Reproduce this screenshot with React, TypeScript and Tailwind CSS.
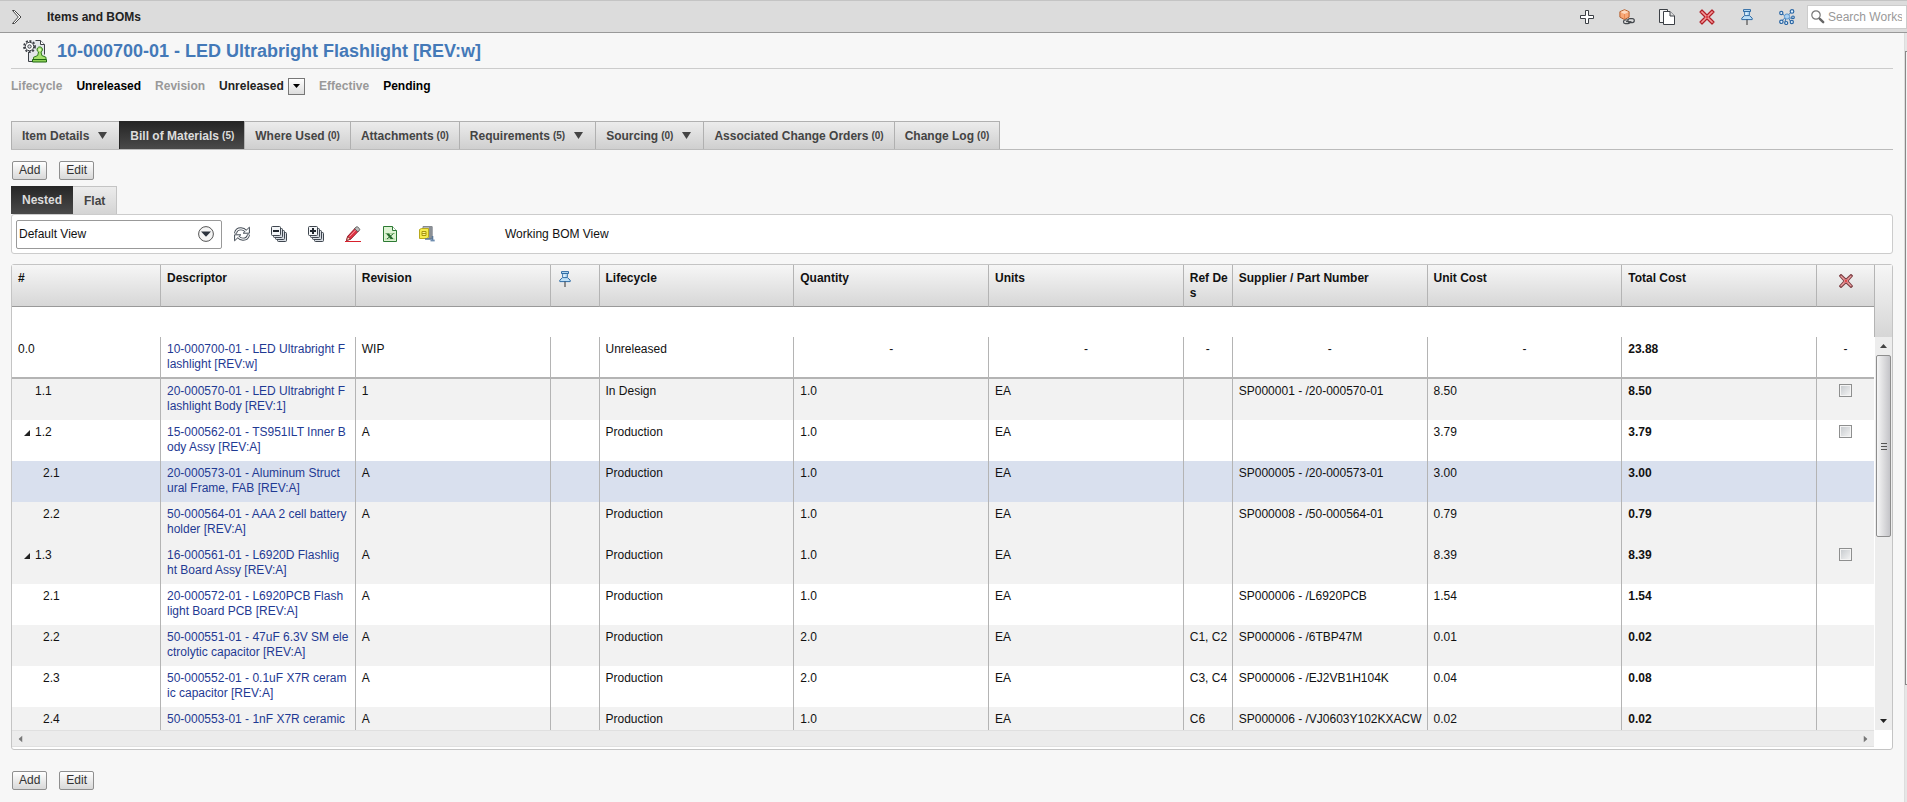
import { ReactNode, useState } from "react";
import clsx from "clsx";

function Icon({ children, className }: { children: ReactNode; className?: string }) {
  return (
    <svg viewBox="0 0 16 16" className={clsx("block size-4 shrink-0", className)} fill="none" aria-hidden="true">
      {children}
    </svg>
  );
}

function PlusIcon() {
  return (
    <Icon>
      <path d="M6.5 1.5h3v5h5v3h-5v5h-3v-5h-5v-3h5z" fill="#fff" stroke="#3c4046" />
    </Icon>
  );
}

function PartsIcon() {
  return (
    <Icon>
      <path d="M5.5.7l4.6 2v5.4l-4.6 2.5L.9 8.1V2.7z" fill="#f8a878" stroke="#b5602f" />
      <path d="M1.4 3.1l4.1 1.8 4.1-1.8-4.1-1.9z" fill="#fdd9bf" />
      <path d="M5.5 5v5" stroke="#e98b55" />
      <rect x="4.500" y="11" width="6.500" height="3.600" rx="1.800" stroke="#44484d" strokeWidth="1.200" fill="#ddd" />
      <rect x="8.900" y="9.600" width="6.400" height="4" rx="2" stroke="#44484d" strokeWidth="1.200" fill="#ddd" />
      <path d="M7 12.600h5.500" stroke="#44484d" />
    </Icon>
  );
}

function CopyIcon() {
  return (
    <Icon>
      <path d="M4 13.500H.5V.5h8v2" fill="#f4f4f4" stroke="#3c4046" />
      <path d="M4.500 2.500h6.500l4.500 4.500v8.500h-11z" fill="#fff" stroke="#3c4046" />
      <path d="M11 2.500V7h4.500" fill="#ddd" stroke="#3c4046" />
    </Icon>
  );
}

function DeleteIcon() {
  return (
    <Icon>
      <path
        d="M3 1L8 6l5-5 2 2-5 5 5 5-2 2-5-5-5 5-2-2 5-5-5-5z"
        fill="#f79a9a"
        stroke="#b01e26"
        strokeWidth="1.200"
        strokeLinejoin="round"
      />
      <path d="M7 7l2 2M9 7L7 9" stroke="#e0444b" />
    </Icon>
  );
}

function MutedDeleteIcon() {
  return (
    <Icon>
      <path
        d="M3 1.500l5 4.700 5-4.700L14.500 3 10 8l4.500 5-1.500 1.500-5-4.700-5 4.700L1.500 13 6 8 1.500 3z"
        fill="#f0a0a0"
        stroke="#7d3f44"
        strokeWidth="1.100"
        strokeLinejoin="round"
      />
      <path d="M6.500 6.500l3 3M9.500 6.500l-3 3" stroke="#e8474e" />
    </Icon>
  );
}

function PinIcon() {
  return (
    <Icon>
      <path d="M4.500.6h7v2l-1.200.9v3l2.900 2.600v1.500H2.800V9.100l2.900-2.600v-3l-1.200-.9z" fill="#bfe0f7" stroke="#2f6ca5" />
      <path d="M5 2.500h6M6 6.600h4" stroke="#2f6ca5" />
      <path d="M7 3.500v2.600" stroke="#fff" />
      <path d="M8 10.600V16" stroke="#333" />
    </Icon>
  );
}

function NetworkIcon() {
  return (
    <Icon>
      <path d="M2.500 4L7 8l6-5.500M7 8l-1 5.500M7 8l6.500 1.500M7 8l-4.500 4M9 8l2.500 4.500" stroke="#3b78b5" />
      <circle cx="8" cy="7.500" r="2.600" fill="#a9d0f2" stroke="#5b96cd" />
      <g fill="#e4f2fd" stroke="#2a66a4" strokeWidth="1.200">
        <circle cx="2.300" cy="4" r="1.600" />
        <circle cx="13" cy="2.400" r="1.800" />
        <circle cx="2.400" cy="12.800" r="1.700" />
        <circle cx="7.200" cy="14" r="1.500" />
        <circle cx="12.800" cy="13" r="1.600" />
        <circle cx="14" cy="8.300" r="1.300" />
      </g>
    </Icon>
  );
}

function ItemIcon() {
  return (
    <svg viewBox="0 0 24 24" className="block size-6 shrink-0" fill="none" aria-hidden="true">
      <path d="M8.500 1.500h10l3.500 3.500v17H5.500V11" fill="#e3e6ea" />
      <path d="M12.500 1.500h5l4 4v10M5.500 13v9.500h5" stroke="#3c4046" />
      <path d="M17.500 1.500v4h4" fill="#fff" stroke="#3c4046" />
      <circle cx="6.500" cy="7.500" r="5.500" stroke="#3c4046" strokeWidth="1.800" strokeDasharray="2 1.600" />
      <circle cx="6.500" cy="7.500" r="4.200" fill="#fff" stroke="#3c4046" />
      <circle cx="6.500" cy="7.500" r="1.700" fill="#e3e6ea" stroke="#3c4046" />
      <path
        d="M14.700 16.500l.8-3.500a2.700 2.700 0 1 1 2.500 0l.8 3.500 4.200 1.800v2.200H10.500v-2.200z"
        fill="#a5e06c"
        stroke="#2f7a1c"
      />
      <circle cx="16.700" cy="10.800" r="1.400" fill="#d9f7b8" />
      <path d="M9.500 20.500h14v2.500h-14z" fill="#8ed257" stroke="#1f6612" />
    </svg>
  );
}

function ChevronIcon() {
  return (
    <Icon>
      <path d="M4.500 1.500h2L13 8l-6.500 6.500h-2L10.300 8z" fill="#fff" stroke="#444" />
    </Icon>
  );
}

function RefreshIcon() {
  return (
    <Icon>
      <path d="M1.500 7.500C2 4.200 4.600 2.800 7 2.800c2 0 3.700.9 4.800 2.300" stroke="#424a54" strokeWidth="3" />
      <path d="M14.500 8.500c-.5 3.300-3.100 4.700-5.500 4.700-2 0-3.700-.9-4.800-2.300" stroke="#424a54" strokeWidth="3" />
      <path d="M15.400 1.200v6H9.200z" fill="#fff" stroke="#424a54" />
      <path d="M.6 14.800v-6h6.200z" fill="#fff" stroke="#424a54" />
      <path d="M1.600 7C2 4.200 4.600 2.800 7 2.800c2 0 3.700.9 5 2.500" stroke="#fff" strokeWidth="1.200" />
      <path d="M14.400 9c-.4 2.800-3 4.200-5.400 4.200-2 0-3.700-.9-5-2.500" stroke="#fff" strokeWidth="1.200" />
    </Icon>
  );
}

function StackIcon({ expand }: { expand?: boolean }) {
  return (
    <Icon>
      <g fill="#d8dde3" stroke="#3f464f">
        <rect x="6.500" y="6.500" width="9" height="9" rx="1" />
        <rect x="4.500" y="4.500" width="9" height="9" rx="1" />
        <rect x="2.500" y="2.500" width="9" height="9" rx="1" />
      </g>
      <rect x=".5" y=".5" width="9" height="9" rx="1" fill="#f3f5f7" stroke="#3f464f" />
      <path d="M2 5h6" stroke="#20262e" strokeWidth="2" />
      {expand && <path d="M5 2v6" stroke="#20262e" strokeWidth="2" />}
    </Icon>
  );
}

function PencilIcon() {
  return (
    <Icon>
      <path d="M1.500 14.500l1.200-4.200L10.500 1.800l3.300 3-8 8.300z" fill="#e13344" stroke="#8a1522" strokeWidth=".9" />
      <path d="M9.600 2.800l1.500-1.700c.5-.5 1.100-.5 1.700 0l1.600 1.500c.5.500.5 1 0 1.600l-1.500 1.600z" fill="#bcbcbc" stroke="#555" strokeWidth=".9" />
      <path d="M4.500 10.500l6-6.300" stroke="#f7a0a6" />
      <path d="M1.500 14.500l1.200-4 2.900 2.700z" fill="#f5dfc0" stroke="#8a1522" strokeWidth=".8" />
      <path d="M0 15.500h16" stroke="#d8202c" />
    </Icon>
  );
}

function SheetIcon() {
  return (
    <Icon>
      <path d="M1.500.5h9l4 4v11h-13z" fill="#ddf3d3" stroke="#2d7a34" />
      <path d="M10.500.5v4h4" fill="#fff" stroke="#2d7a34" />
      <path d="M3 7.500h10M3 13h10" stroke="#a9d69c" />
      <path d="M4 7.500h3l4.500 5.500h-3z" fill="#256b2c" />
      <path d="M11.500 7.500L5 13" stroke="#256b2c" />
    </Icon>
  );
}

function ZipIcon() {
  return (
    <Icon>
      <path d="M4 .5h9v12H4z" fill="#b4b7bb" stroke="#85898f" />
      <path d="M10 1l3.500-.5v12H10z" fill="#8b9096" />
      <path d="M.5 3.500l2-1h7v8.500l-1.500 1.500H.5z" fill="#f6ec4c" stroke="#b9a91c" />
      <path d="M3 5.500h4v4H3zM3 7.500h4" stroke="#a8960e" fill="#fdf68c" />
      <path d="M6 13h6.500M13.500 10v5" stroke="#5b7898" strokeWidth="1.600" />
      <path d="M11.500 14.500h4.200" stroke="#6e8db0" strokeWidth="1.800" />
    </Icon>
  );
}

function SearchIcon() {
  return (
    <Icon>
      <circle cx="6" cy="6" r="4.200" stroke="#777" strokeWidth="1.200" />
      <path d="M9.800 9.800l3.400 3.400" stroke="#666" strokeWidth="2.400" strokeLinecap="round" />
    </Icon>
  );
}

function Caret({ className = "h-[7px] w-[9px]" }: { className?: string }) {
  return (
    <svg viewBox="0 0 9 7" preserveAspectRatio="none" className={clsx("block", className)} aria-hidden="true">
      <path d="M0 0h9L4.500 7z" fill="currentColor" />
    </svg>
  );
}

const toolbarActions = [
  { label: "Add", icon: <PlusIcon /> },
  { label: "Parts", icon: <PartsIcon /> },
  { label: "Copy", icon: <CopyIcon /> },
  { label: "Delete", icon: <DeleteIcon /> },
  { label: "Pin", icon: <PinIcon /> },
  { label: "Relations", icon: <NetworkIcon /> },
];

const tabs: { label: string; count?: number; menu?: boolean }[] = [
  { label: "Item Details", menu: true },
  { label: "Bill of Materials", count: 5 },
  { label: "Where Used", count: 0 },
  { label: "Attachments", count: 0 },
  { label: "Requirements", count: 5, menu: true },
  { label: "Sourcing", count: 0, menu: true },
  { label: "Associated Change Orders", count: 0 },
  { label: "Change Log", count: 0 },
];

const viewActions = [
  { label: "Refresh", icon: <RefreshIcon /> },
  { label: "Collapse all", icon: <StackIcon /> },
  { label: "Expand all", icon: <StackIcon expand /> },
  { label: "Markup", icon: <PencilIcon /> },
  { label: "Export to spreadsheet", icon: <SheetIcon /> },
  { label: "Download archive", icon: <ZipIcon /> },
];

type Row = {
  num: string;
  level: 1 | 2;
  open?: boolean;
  name: string;
  rev: string;
  lifecycle: string;
  qty: string;
  refDes?: string;
  supplier?: string;
  unit: string;
  total: string;
  tone: "white" | "gray" | "blue";
};

const rows: Row[] = [
  { num: "1.1", level: 1, name: "20-000570-01 - LED Ultrabright F\nlashlight Body [REV:1]", rev: "1", lifecycle: "In Design", qty: "1.0", supplier: "SP000001 - /20-000570-01", unit: "8.50", total: "8.50", tone: "gray" },
  { num: "1.2", level: 1, open: true, name: "15-000562-01 - TS951ILT Inner B\nody Assy [REV:A]", rev: "A", lifecycle: "Production", qty: "1.0", unit: "3.79", total: "3.79", tone: "white" },
  { num: "2.1", level: 2, name: "20-000573-01 - Aluminum Struct\nural Frame, FAB [REV:A]", rev: "A", lifecycle: "Production", qty: "1.0", supplier: "SP000005 - /20-000573-01", unit: "3.00", total: "3.00", tone: "blue" },
  { num: "2.2", level: 2, name: "50-000564-01 - AAA 2 cell battery\nholder [REV:A]", rev: "A", lifecycle: "Production", qty: "1.0", supplier: "SP000008 - /50-000564-01", unit: "0.79", total: "0.79", tone: "gray" },
  { num: "1.3", level: 1, open: true, name: "16-000561-01 - L6920D Flashlig\nht Board Assy [REV:A]", rev: "A", lifecycle: "Production", qty: "1.0", unit: "8.39", total: "8.39", tone: "gray" },
  { num: "2.1", level: 2, name: "20-000572-01 - L6920PCB Flash\nlight Board PCB [REV:A]", rev: "A", lifecycle: "Production", qty: "1.0", supplier: "SP000006 - /L6920PCB", unit: "1.54", total: "1.54", tone: "white" },
  { num: "2.2", level: 2, name: "50-000551-01 - 47uF 6.3V SM ele\nctrolytic capacitor [REV:A]", rev: "A", lifecycle: "Production", qty: "2.0", refDes: "C1, C2", supplier: "SP000006 - /6TBP47M", unit: "0.01", total: "0.02", tone: "gray" },
  { num: "2.3", level: 2, name: "50-000552-01 - 0.1uF X7R ceram\nic capacitor [REV:A]", rev: "A", lifecycle: "Production", qty: "2.0", refDes: "C3, C4", supplier: "SP000006 - /EJ2VB1H104K", unit: "0.04", total: "0.08", tone: "white" },
  { num: "2.4", level: 2, name: "50-000553-01 - 1nF X7R ceramic", rev: "A", lifecycle: "Production", qty: "1.0", refDes: "C6", supplier: "SP000006 - /VJ0603Y102KXACW", unit: "0.02", total: "0.02", tone: "gray" },
];

const tones = {
  white: "bg-white",
  gray: "bg-[#f2f2f2]",
  blue: "bg-[#d9e0ee]",
};

const th = "border-r border-b border-r-[#b4b4b4] border-b-[#999] pt-[6px] pl-[6px] text-left align-top font-bold";
const td = "border-r border-[#b4b4b4] pt-[5px] pl-[6px] align-top whitespace-pre";
const rootTd = "border-r border-b-2 border-[#b4b4b4] pt-[5px] pl-[6px] align-top whitespace-pre";

function AddEdit() {
  const cls =
    "h-[19px] rounded-[2px] border border-[#8f8f8f] bg-linear-to-b from-white to-[#d8d8d8] px-[6px] text-xs leading-[17px] text-[#333]";
  return (
    <div className="flex gap-3 px-px">
      <button className={cls}>Add</button>
      <button className={cls}>Edit</button>
    </div>
  );
}

function BomTable() {
  return (
    <table className="w-full table-fixed border-separate border-spacing-0 leading-[15px]">
      <colgroup>
        <col className="w-[149px]" />
        <col />
        <col />
        <col className="w-[49px]" />
        <col />
        <col />
        <col />
        <col className="w-[49px]" />
        <col />
        <col />
        <col />
        <col className="w-[57px]" />
      </colgroup>
      <thead>
        <tr className="h-[42px] bg-linear-to-b from-[#f6f6f6] to-[#d6d6d6]">
          <th className={th}>#</th>
          <th className={th}>Descriptor</th>
          <th className={th}>Revision</th>
          <th className={th} aria-label="Pinned">
            <PinIcon />
          </th>
          <th className={th}>Lifecycle</th>
          <th className={th}>Quantity</th>
          <th className={th}>Units</th>
          <th className={clsx(th, "whitespace-pre")}>{"Ref De\ns"}</th>
          <th className={th}>Supplier / Part Number</th>
          <th className={th}>Unit Cost</th>
          <th className={th}>Total Cost</th>
          <th className="border-b border-[#999] pt-2 align-top" aria-label="Delete">
            <div className="flex justify-center">
              <MutedDeleteIcon />
            </div>
          </th>
        </tr>
      </thead>
      <tbody>
        <tr className="h-[30px]">
          <td colSpan={12} />
        </tr>
        <tr className="h-[42px] bg-white">
          <td className={rootTd}>0.0</td>
          <td className={rootTd}>
            <a href="#" className="text-[#1f3a93]">{"10-000700-01 - LED Ultrabright F\nlashlight [REV:w]"}</a>
          </td>
          <td className={rootTd}>WIP</td>
          <td className={rootTd} />
          <td className={rootTd}>Unreleased</td>
          {["qty", "units", "refdes", "supplier", "unit"].map((key) => (
            <td key={key} className="border-r border-b-2 border-[#b4b4b4] pt-[5px] text-center align-top">-</td>
          ))}
          <td className={clsx(rootTd, "font-bold")}>23.88</td>
          <td className="border-b-2 border-[#b4b4b4] pt-[5px] text-center align-top">-</td>
        </tr>
        {rows.map((row, i) => (
          <tr key={i} className={clsx("h-[41px]", tones[row.tone])}>
            <td className={td}>
              <div className={clsx("flex items-center", row.level === 2 && "pl-2")}>
                <span className="flex w-[17px] justify-center">
                  {row.open && (
                    <svg viewBox="0 0 6 6" className="size-[6px]" aria-hidden="true">
                      <path d="M6 0v6H0z" fill="#222" />
                    </svg>
                  )}
                </span>
                {row.num}
              </div>
            </td>
            <td className={td}>
              <a href="#" className="text-[#1f3a93]">{row.name}</a>
            </td>
            <td className={td}>{row.rev}</td>
            <td className={td} />
            <td className={td}>{row.lifecycle}</td>
            <td className={td}>{row.qty}</td>
            <td className={td}>EA</td>
            <td className={td}>{row.refDes}</td>
            <td className={td}>{row.supplier}</td>
            <td className={td}>{row.unit}</td>
            <td className={clsx(td, "font-bold")}>{row.total}</td>
            <td className="pt-[5px] align-top">
              {row.level === 1 && (
                <input
                  type="checkbox"
                  aria-label={`Delete ${row.num}`}
                  className="mx-auto block size-[13px] appearance-none border border-[#8e8f8f] bg-linear-to-br from-[#c4c8cc] to-[#f6f6f6] ring-1 ring-[#f4f4f4] ring-inset checked:bg-[#555]"
                />
              )}
            </td>
          </tr>
        ))}
      </tbody>
    </table>
  );
}

export default function App() {
  const [tab, setTab] = useState("Bill of Materials");
  const [mode, setMode] = useState("Nested");

  return (
    <div className="flex min-h-screen flex-col bg-[#f7f7f7] font-['Liberation_Sans',Arial,sans-serif] text-xs text-[#111]">
      <header className="flex h-[33px] items-center overflow-hidden border-t border-b border-t-[#c4c4c4] border-b-[#999] bg-[#dcdcdc] pl-2">
        <button aria-label="Expand navigation">
          <ChevronIcon />
        </button>
        <h2 className="ml-[23px] font-bold text-[#222]">Items and BOMs</h2>
        <div className="ml-auto flex gap-6">
          {toolbarActions.map((a) => (
            <button key={a.label} aria-label={a.label}>
              {a.icon}
            </button>
          ))}
        </div>
        <label className="ml-3 flex h-[24px] w-[100px] items-center border border-[#ccc] bg-white pr-1 pl-[2px]">
          <SearchIcon />
          <input
            aria-label="Search Workspace"
            placeholder="Search Works"
            className="ml-[2px] w-full min-w-0 outline-none placeholder:text-[#999]"
          />
        </label>
      </header>

      <div className="flex flex-1">
        <main className="min-w-0 flex-1 pr-[11px] pb-[10px] pl-[11px]">
          <div className="flex h-9 items-center gap-[10px] border-b border-[#ccc] pl-3">
            <ItemIcon />
            <h1 className="text-lg font-bold text-[#4479b8]">10-000700-01 - LED Ultrabright Flashlight [REV:w]</h1>
          </div>

          <div className="flex h-[34px] items-center gap-[14px] font-bold">
            <span className="text-[#999]">Lifecycle</span>
            <span className="text-black">Unreleased</span>
            <label htmlFor="revision" className="text-[#999]">Revision</label>
            <div className="relative flex items-center">
              <select id="revision" className="w-[86px] appearance-none font-bold text-[#222] outline-none">
                <option>Unreleased</option>
              </select>
              <span className="pointer-events-none absolute right-0 flex size-[17px] items-center justify-center border border-[#777] bg-linear-to-b from-white to-[#ddd]">
                <Caret className="h-1 w-[7px] text-black" />
              </span>
            </div>
            <span className="text-[#999]">Effective</span>
            <span className="text-black">Pending</span>
          </div>

          <nav className="mt-[18px] flex h-[29px] border-b border-[#bbb]">
            {tabs.map((t) => (
              <button
                key={t.label}
                onClick={() => setTab(t.label)}
                className={clsx(
                  "flex items-center border-t border-l px-[10px] font-bold last:border-r",
                  t.label === tab
                    ? "border-[#262626] bg-linear-to-b from-[#262626] to-[#4a4a4a] text-[#ddd]"
                    : "border-[#b0b0b0] bg-linear-to-b from-[#ececec] to-[#cfcfcf] text-[#444]",
                )}
              >
                {t.label}
                {t.count !== undefined && <span className="ml-[3px] pt-px text-[10px]">({t.count})</span>}
                {t.menu && (
                  <span className="mr-[2px] ml-[9px]">
                    <Caret />
                  </span>
                )}
              </button>
            ))}
          </nav>

          <div className="mt-[11px]">
            <AddEdit />
          </div>

          <div className="mt-[6px] flex h-7">
            {["Nested", "Flat"].map((m) => (
              <button
                key={m}
                onClick={() => setMode(m)}
                className={clsx(
                  "px-[11px] font-bold",
                  m === mode
                    ? "bg-linear-to-b from-[#262626] to-[#4a4a4a] text-[#ddd]"
                    : "border-t border-r border-[#c4c4c4] bg-linear-to-b from-[#ececec] to-[#d4d4d4] text-[#444]",
                )}
              >
                {m}
              </button>
            ))}
          </div>

          <div className="flex h-10 items-center rounded-[3px] border border-[#ccc] bg-white pl-1">
            <div className="relative flex items-center">
              <select
                aria-label="View"
                className="h-[29px] w-[206px] appearance-none rounded-[2px] border border-[#999] bg-white px-[2px] outline-none"
              >
                <option>Default View</option>
              </select>
              <svg viewBox="0 0 16 16" className="pointer-events-none absolute right-2 size-4" aria-hidden="true">
                <circle cx="8" cy="8" r="7.400" fill="#f4f4f4" stroke="#555" />
                <path d="M3 5.500h10L8 10.800z" fill="#2c333d" />
              </svg>
            </div>
            <div className="ml-[12px] flex gap-[21px]">
              {viewActions.map((a) => (
                <button key={a.label} aria-label={a.label}>
                  {a.icon}
                </button>
              ))}
            </div>
            <span className="ml-[70px]">Working BOM View</span>
          </div>

          <section className="mt-[10px] rounded-[3px] border border-[#c4c4c4] bg-white">
            <div className="flex h-[465px]">
              <div className="min-w-0 flex-1 overflow-hidden">
                <BomTable />
              </div>
              <div className="flex w-[18px] flex-col">
                <div className="h-[72px] border-l border-[#b4b4b4] bg-linear-to-b from-[#f6f6f6] to-[#d6d6d6]" />
                <div className="ml-px flex flex-1 flex-col items-center bg-[#ededed]">
                  <div className="flex h-[18px] items-center">
                    <Caret className="h-1 w-[7px] rotate-180 text-[#444]" />
                  </div>
                  <div className="flex h-[182px] w-[15px] flex-col items-center justify-center gap-[2px] rounded-[2px] border border-[#8e8e8e] bg-linear-to-r from-[#f6f6f6] to-[#c4c4c8]">
                    <span className="h-px w-[6px] bg-[#555]" />
                    <span className="h-px w-[6px] bg-[#555]" />
                    <span className="h-px w-[6px] bg-[#555]" />
                  </div>
                  <div className="mt-auto flex h-[18px] items-center">
                    <Caret className="h-1 w-[7px] text-[#222]" />
                  </div>
                </div>
              </div>
            </div>
            <div className="mr-[18px] mb-[2px] flex h-[17px] items-center justify-between border-t border-b border-[#e0e0e0] bg-[#ececec] px-[5px]">
              <Caret className="h-1 w-[7px] rotate-90 text-[#777]" />
              <Caret className="h-1 w-[7px] -rotate-90 text-[#777]" />
            </div>
          </section>

          <div className="mt-[21px]">
            <AddEdit />
          </div>
        </main>

        <div className="w-[3px] overflow-hidden border-l border-[#ddd] bg-[#e6e6e6] pt-[18px]">
          <div className="h-[634px] border-y border-l border-[#888] bg-[#f2f2f2]" />
        </div>
      </div>
    </div>
  );
}
